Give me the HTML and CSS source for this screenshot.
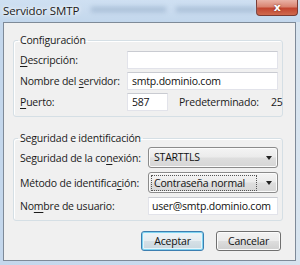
FILE: index.html
```html
<!DOCTYPE html>
<html lang="es">
<head>
<meta charset="utf-8">
<title>Servidor SMTP</title>
<link rel="stylesheet" href="styles.css">
</head>
<body>
<div class="window">
  <div class="titlebar">
    <span class="title">Servidor SMTP</span>
    <span class="haze h1"></span>
    <span class="haze h2"></span>
    <span class="close"><span class="x">x</span></span>
  </div>
  <div class="client">
    <fieldset class="group cfg">
      <legend>Configuración</legend>
      <div class="row">
        <span class="lbl"><u>D</u>escripción:</span>
        <span class="field wide"></span>
      </div>
      <div class="row">
        <span class="lbl">Nombre del <u>s</u>ervidor:</span>
        <span class="field wide">smtp.dominio.com</span>
      </div>
      <div class="row port">
        <span class="lbl"><u>P</u>uerto:</span>
        <span class="field short">587</span>
        <span class="def">Predeterminado:</span>
        <span class="defval">25</span>
      </div>
    </fieldset>
    <fieldset class="group sec">
      <legend>Seguridad e identificación</legend>
      <div class="row">
        <span class="lbl">Seguridad de la co<u>n</u>exión:</span>
        <span class="combo"><span class="ctext">STARTTLS</span><span class="arrow"></span></span>
      </div>
      <div class="row">
        <span class="lbl">Método de identifica<u>c</u>ión:</span>
        <span class="combo focus"><span class="ctext">Contraseña normal</span><span class="arrow"></span></span>
      </div>
      <div class="row">
        <span class="lbl">No<u>m</u>bre de usuario:</span>
        <span class="field user">user@smtp.dominio.com</span>
      </div>
    </fieldset>
    <div class="buttons">
      <span class="btn default">Aceptar</span>
      <span class="btn">Cancelar</span>
    </div>
  </div>
</div>
</body>
</html>
```
FILE: styles.css
```css
html, body {
  margin: 0;
  padding: 0;
}
body {
  width: 300px;
  height: 265px;
  overflow: hidden;
  font-family: "Open Sans", "Noto Sans", sans-serif;
  font-size: 10.5px;
  letter-spacing: -0.2px;
  color: #1b1b1b;
}
.window {
  width: 300px;
  height: 265px;
  box-sizing: border-box;
  background: linear-gradient(90deg, #c4d7ec 0%, #c9dbee 60%, #d8e4ef 100%);
  display: flex;
  flex-direction: column;
}
.titlebar {
  height: 22px;
  flex: none;
  display: flex;
  align-items: flex-start;
  padding: 0 3px 0 3px;
  box-sizing: border-box;
  background: linear-gradient(180deg, #cfe0f2 0%, #c3d7ec 100%);
}
.title {
  flex: none;
  white-space: nowrap;
  font-size: 11.5px;
  letter-spacing: -0.1px;
  line-height: 22px;
  color: #1a1a1a;
  text-shadow: 0 0 6px #ffffff, 0 0 3px #ffffff;
}
.haze {
  flex: none;
  height: 5px;
  margin-top: 7px;
  background: #8fa8c4;
  filter: blur(2.5px);
  opacity: 0.6;
}
.h1 { width: 75px; margin-left: 12px; }
.h2 { width: 80px; margin-left: 10px; }
.close {
  flex: none;
  margin-left: auto;
  width: 42px;
  height: 16px;
  box-sizing: border-box;
  border: 1px solid #7a3b33;
  border-top: 0;
  border-radius: 0 0 4px 4px;
  background: linear-gradient(180deg, #e9b2a6 0%, #d98471 45%, #c2452f 55%, #cf6a4e 100%);
  display: flex;
  align-items: center;
  justify-content: center;
}
.close .x {
  color: #ffffff;
  font-family: "DejaVu Sans", sans-serif;
  font-weight: bold;
  font-size: 11px;
  letter-spacing: 0;
  line-height: 14px;
  text-shadow: 0 0 2px #6d2a20;
}
.client {
  flex: 1;
  min-height: 0;
  margin: 0 4px 4px 3px;
  border: 1px solid #7e8a98;
  background: #f0f0f0;
  display: flex;
  flex-direction: column;
}
.group {
  margin: 0 12px 0 9px;
  border: 1px solid #d5dfe5;
  border-radius: 3px;
  box-shadow: inset 1px 1px 0 #ffffff;
  padding: 0 4px 5px 6px;
  min-width: 0;
}
.group legend {
  padding: 0 2px;
  margin-left: -2px;
  line-height: 16px;
  white-space: nowrap;
  color: #1b1b1b;
}
.cfg {
  margin-top: 9px;
  padding-top: 3px;
}
.sec {
  margin-top: 13px;
  padding-top: 1px;
  padding-bottom: 5px;
}
.row {
  display: flex;
  align-items: center;
  white-space: nowrap;
}
.cfg .row + .row { margin-top: 3px; }
.sec .row + .row { margin-top: 4px; }
.cfg .lbl { width: 107px; flex: none; }
.sec .lbl { width: 128px; flex: none; }
.lbl u { text-decoration-thickness: 1px; text-underline-offset: 2px; }
.field {
  flex: none;
  height: 18px;
  box-sizing: border-box;
  background: #ffffff;
  border: 1px solid #e2e3ea;
  border-top-color: #c9cbd1;
  padding: 0 4px;
  line-height: 16px;
  color: #111111;
  white-space: nowrap;
  overflow: hidden;
}
.wide { width: 151px; }
.short { width: 41px; }
.user { width: 130px; padding: 0 3px; }
.def { margin-left: 11px; }
.defval { margin-left: 12px; }
.combo {
  flex: none;
  width: 130px;
  height: 21px;
  box-sizing: border-box;
  border: 1px solid #8b8b8b;
  border-radius: 3px;
  background: linear-gradient(180deg, #f4f4f4 0%, #ebebeb 48%, #dedede 52%, #d6d6d6 100%);
  display: flex;
  align-items: center;
  padding: 0 5px 0 5px;
  box-shadow: inset 0 0 0 1px #fbfbfb;
}
.ctext {
  flex: 1;
  line-height: 15px;
  color: #111111;
}
.combo.focus { padding-left: 2px; }
.combo.focus .ctext {
  flex: none;
  width: 106px;
  box-sizing: border-box;
  padding-left: 2px;
  border: 1px dotted #555555;
  line-height: 14px;
  margin-right: auto;
}
.arrow {
  flex: none;
  width: 0;
  height: 0;
  border-left: 3.5px solid transparent;
  border-right: 3.5px solid transparent;
  border-top: 4px solid #222222;
}
.buttons {
  display: flex;
  justify-content: flex-end;
  gap: 12px;
  margin: 10px 14px 0 0;
}
.btn {
  height: 20px;
  box-sizing: border-box;
  border: 1px solid #707070;
  border-radius: 3px;
  background: linear-gradient(180deg, #f2f2f2 0%, #ebebeb 48%, #dddddd 52%, #cfcfcf 100%);
  box-shadow: inset 0 0 0 1px #fbfbfb;
  line-height: 18px;
  text-align: center;
  color: #111111;
}
.btn.default {
  width: 63px;
  border-color: #3c7fb1;
  box-shadow: inset 0 0 0 1px #7fd3f0, inset 0 0 0 2px #e6f4fa;
  background: linear-gradient(180deg, #eef4f7 0%, #e6edf1 48%, #d5e0e6 52%, #c9d6de 100%);
}
.btn + .btn { width: 65px; }
```
